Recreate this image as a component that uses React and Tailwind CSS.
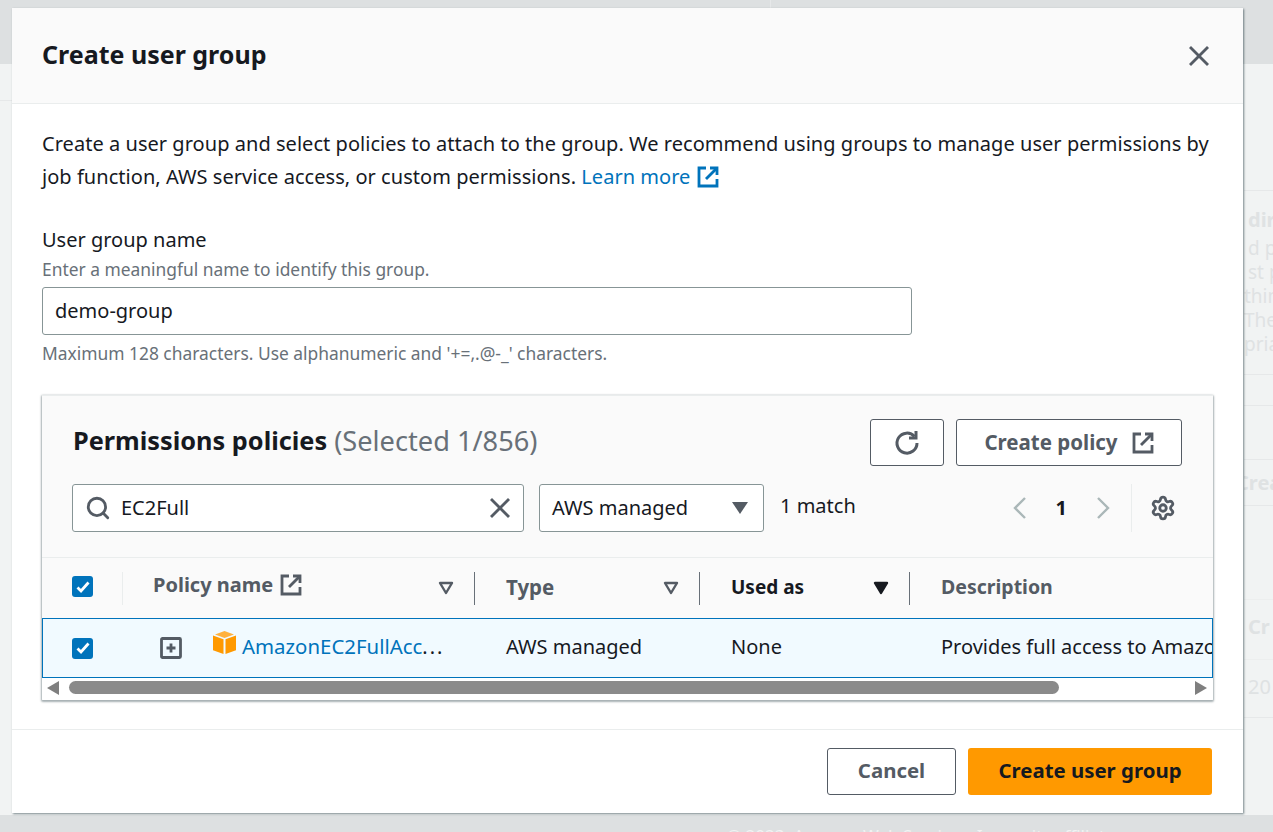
import React from 'react';
import { Search, Settings } from 'lucide-react';

const ExternalIcon = ({ className }) => (
  <svg viewBox="0 0 22 22" fill="none" stroke="currentColor" strokeWidth="2.8" className={className}>
    <path d="M9 2H2v18h18v-7" />
    <path d="M13 2h7v7" />
    <path d="M20 2L9 13" />
  </svg>
);

const CloseIcon = ({ className }) => (
  <svg viewBox="0 0 22 22" fill="none" stroke="currentColor" strokeWidth="2.8" className={className}>
    <path d="M2 2l18 18" />
    <path d="M20 2L2 20" />
  </svg>
);

const SortIcon = ({ filled }) => (
  <svg viewBox="0 0 16 14" className="w-4 h-3.5">
    <path
      d="M2 2h12L8 12z"
      fill={filled ? '#16191f' : 'none'}
      stroke={filled ? '#16191f' : '#545b64'}
      strokeWidth="2.4"
      strokeLinejoin="round"
    />
  </svg>
);

const Checkbox = () => (
  <div className="w-[21px] h-[21px] rounded-[3px] bg-[#0073bb] flex items-center justify-center">
    <svg viewBox="0 0 16 16" fill="none" stroke="white" strokeWidth="2.8" className="w-4 h-4">
      <path d="M2.5 8.5l3.5 3.5 7.5-8.5" />
    </svg>
  </div>
);

const Divider = ({ light }) => (
  <div className={`w-px h-[33px] ${light ? 'bg-[#eaeded]' : 'bg-[#687078]'}`} />
);

const HeadCell = ({ label, dark, filled, size }) => (
  <div className="flex items-center h-full pl-[31px]">
    <span className={`font-bold pb-[2px] ${size} ${dark ? 'text-[#16191f]' : 'text-[#545b64]'}`}>{label}</span>
    <div className="ml-auto flex items-center">
      <div className="mr-5"><SortIcon filled={filled} /></div>
      <Divider />
    </div>
  </div>
);

const PagerArrow = ({ d }) => (
  <svg viewBox="0 0 16 24" fill="none" stroke="#aab7b8" strokeWidth="2.4" className="w-4 h-6">
    <path d={d} />
  </svg>
);

export default function App() {
  return (
    <div className="relative h-[832px] w-[1273px] overflow-hidden bg-[#f1f3f3] text-[#16191f] font-['Noto_Sans',sans-serif]">
      {/* page behind the dialog */}
      <div className="h-16 bg-[#dde0e1]">
        <div className="ml-[770px] h-2 border-l border-[#e6e8e9]" />
      </div>
      <div className="flex">
        <div className="w-3 h-[37px] border-b border-[#e6e8e9]" />
        <div className="ml-auto w-[29px] flex flex-col text-[#dfe2e3] whitespace-nowrap overflow-hidden">
          <div className="h-[127px] border-b border-[#e6e8e9]" />
          <div className="h-[184px] border-b border-[#e6e8e9] pt-[16px]">
            <div className="pl-1 text-[20px] font-bold leading-[26px]">dir</div>
            <div className="text-[19px] leading-[24px] pt-[3px]">
              <div className="pl-1">d po</div>
              <div className="pl-1">st pr</div>
              <div>thing</div>
              <div>Ther</div>
              <div>pria</div>
            </div>
          </div>
          <div className="h-[31px] border-b border-[#e6e8e9]" />
          <div className="h-[54px] border-b border-[#e6e8e9]" />
          <div className="h-[46px] border-b border-[#e6e8e9] pt-[10px] font-bold text-[20px] leading-[26px] -ml-2">Crea</div>
          <div className="h-[94px] border-b border-[#eceeee]" />
          <div className="h-[60px] border-b border-[#eceeee] pt-[14px] pl-1 font-bold text-[20px] leading-[26px]">Cr</div>
          <div className="h-[58px] border-b border-[#e6e8e9] pt-[14px] pl-1 text-[20px] leading-[26px]">20</div>
        </div>
      </div>
      <div className="absolute left-0 right-0 bottom-0 h-[17px] bg-[#dde0e1] text-[#f1f3f3] text-[17px] leading-[17px] pl-[727px] pt-[12px] whitespace-nowrap overflow-hidden">
        © 2023, Amazon Web Services, Inc. or its affiliates.
      </div>

      {/* dialog */}
      <div className="absolute left-3 top-2 w-[1231px] h-[805px] bg-white flex flex-col shadow-[1px_1px_2px_rgba(0,28,36,0.5)]">
        <div className="h-[96px] shrink-0 bg-[#fafafa] border-b border-[#eaeded] flex items-center justify-between pl-[30px] pr-[33px]">
          <h1 className="text-[25px] font-bold leading-none pb-[2px]">Create user group</h1>
          <CloseIcon className="w-[22px] h-[22px] text-[#545b64]" />
        </div>

        <div className="flex-1 pl-[30px] pr-[30px] pt-[23px]">
          <p className="text-[20px] leading-[33px] tracking-[0.04px]">
            Create a user group and select policies to attach to the group. We recommend using groups to manage user permissions by job function, AWS service access, or custom permissions.{' '}
            <span className="text-[#0073bb] inline-flex items-center gap-[7px]">
              Learn more <ExternalIcon className="w-[22px] h-[22px]" />
            </span>
          </p>

          <div className="mt-[34px] text-[20px] leading-[26px]">User group name</div>
          <div className="text-[17.4px] leading-[22px] mt-[5px] text-[#687078]">Enter a meaningful name to identify this group.</div>
          <div className="mt-[7px] w-[870px] h-12 border border-[#879596] rounded-[3px] flex items-center px-3 text-[20px]">demo-group</div>
          <div className="text-[17.4px] leading-[22px] mt-[7px] text-[#687078]">Maximum 128 characters. Use alphanumeric and '+=,.@-_' characters.</div>

          {/* policies table */}
          <div className="mt-[31px] w-[1171px] h-[305px] rounded-[1px] border-t border-[#eaeded] shadow-[0_1px_2px_1px_rgba(0,28,36,0.35)] flex flex-col overflow-hidden">
            <div className="h-[162px] shrink-0 bg-[#fafafa] border-b border-[#eaeded] pl-[30px] pr-[31px]">
              <div className="flex items-start justify-between pt-[23px]">
                <div className="h-[47px] flex items-center pl-px pb-[3px] whitespace-nowrap">
                  <span className="font-bold text-[25.3px]">Permissions policies</span>
                  <span className="ml-[7px] text-[#687078] text-[27.2px]">(Selected 1/856)</span>
                </div>
                <div className="flex gap-3">
                  <div className="w-[74px] h-[47px] bg-white border border-[#545b64] rounded-[3px] flex items-center justify-center text-[#545b64]">
                    <svg viewBox="0 0 26 26" fill="none" stroke="currentColor" strokeWidth="3" className="w-[26px] h-[26px]">
                      <path d="M20.5 6.5A10 10 0 1 0 23 13" />
                      <path d="M22 1v7h-7" />
                    </svg>
                  </div>
                  <div className="w-[226px] h-[47px] bg-white border border-[#545b64] rounded-[3px] flex items-center justify-center gap-[14px] text-[#545b64] font-bold text-[20.5px]">
                    Create policy <ExternalIcon className="w-[22px] h-[22px]" />
                  </div>
                </div>
              </div>

              <div className="flex items-center mt-[18px]">
                <div className="w-[452px] h-12 bg-white border border-[#879596] rounded-[3px] flex items-center pl-3 pr-3 text-[20px]">
                  <Search className="w-[26px] h-[26px] text-[#545b64]" strokeWidth={2.6} />
                  <span className="ml-[10px]">EC2Full</span>
                  <CloseIcon className="w-[22px] h-[22px] ml-auto text-[#545b64]" />
                </div>
                <div className="ml-[15px] w-[225px] h-12 bg-white border border-[#879596] rounded-[3px] flex items-center justify-between pl-3 pr-[15px] text-[20px]">
                  AWS managed
                  <svg viewBox="0 0 16 12" className="w-4 h-3"><path d="M0 0h16L8 12z" fill="#545b64" /></svg>
                </div>
                <div className="ml-4 text-[20px] pb-[5px]">1 match</div>
                <div className="ml-auto flex items-center h-12">
                  <PagerArrow d="M13 2L3 12l10 10" />
                  <span className="mx-[28px] text-[20px] font-bold">1</span>
                  <PagerArrow d="M3 2l10 10L3 22" />
                  <div className="w-px h-12 bg-[#eaeded] ml-5 mr-[18px]" />
                  <Settings className="w-[26px] h-[26px] text-[#545b64] mr-[6px]" strokeWidth={2.6} />
                </div>
              </div>
            </div>

            <div className="h-[60px] shrink-0 bg-[#fafafa] grid grid-cols-[81px_352px_225px_210px_1fr] items-center">
              <div className="h-full flex items-center pl-[30px]">
                <div className="pb-[3px]"><Checkbox /></div>
                <div className="ml-auto"><Divider light /></div>
              </div>
              <div className="flex items-center h-full pl-[30px] pb-[7px]">
                <span className="font-bold text-[20px] text-[#545b64]">Policy name</span>
                <ExternalIcon className="w-[22px] h-[22px] ml-[7px] text-[#545b64]" />
                <div className="ml-auto flex items-center pt-[7px]">
                  <div className="mr-5"><SortIcon /></div>
                  <Divider />
                </div>
              </div>
              <HeadCell label="Type" size="text-[20.5px]" />
              <HeadCell label="Used as" dark filled size="text-[19px]" />
              <div className="pl-[31px] pb-[2px] font-bold text-[19.5px] text-[#545b64] whitespace-nowrap">Description</div>
            </div>

            <div className="h-[60px] shrink-0 bg-[#f1faff] border-y border-x border-[#0073bb] grid grid-cols-[79px_352px_225px_210px_1fr] items-center text-[20px] whitespace-nowrap overflow-hidden">
              <div className="pl-[29px]"><Checkbox /></div>
              <div className="flex items-center">
                <svg viewBox="0 0 22 22" fill="none" stroke="#545b64" strokeWidth="2.8" className="w-[22px] h-[22px] ml-[38px] shrink-0">
                  <rect x="1.5" y="1.5" width="19" height="19" rx="1" />
                  <path d="M11 6.5v9M6.5 11h9" />
                </svg>
                <svg viewBox="0 0 23 23" className="w-[23px] h-[23px] ml-[31px] mb-[11px] shrink-0">
                  <path d="M11.5 0L21 3.5l-9.5 3.5L2 3.5z" fill="#ffb13d" />
                  <path d="M0 4.5l10.5 3.7V23L0 19.3z" fill="#ff9900" />
                  <path d="M23 4.5l-10.5 3.7V23L23 19.3z" fill="#ff9900" />
                </svg>
                <span className="ml-[6px] text-[#0073bb] text-[20.4px] pb-[3px]">AmazonEC2FullAcc</span>
                <span className="text-[#16191f] pb-[3px] tracking-[2px]">...</span>
              </div>
              <div className="pl-8 pb-[2px]">AWS managed</div>
              <div className="pl-8 pb-[2px]">None</div>
              <div className="pl-8 pb-[2px]">Provides full access to Amazon EC2 via the AWS Management Console.</div>
            </div>

            <div className="flex-1 bg-white flex items-center pl-[5px] pr-[6px] pb-[3px]">
              <svg viewBox="0 0 12 14" className="w-3 h-3.5"><path d="M12 0v14L0 7z" fill="#7f7f7f" /></svg>
              <div className="ml-[10px] w-[990px] h-[13px] rounded-full bg-[#8a8a8a]" />
              <svg viewBox="0 0 12 14" className="w-3 h-3.5 ml-auto"><path d="M0 0v14l12-7z" fill="#7f7f7f" /></svg>
            </div>
          </div>
        </div>

        <div className="h-[84px] shrink-0 border-t border-[#eaeded] flex justify-end items-start pt-[18px] pr-[31px] gap-3 font-bold text-[20.4px]">
          <div className="w-[129px] h-[47px] pb-[2px] bg-white border border-[#545b64] rounded-[3px] flex items-center justify-center text-[#545b64]">Cancel</div>
          <div className="w-[244px] h-[47px] pb-[2px] bg-[#ff9900] rounded-[3px] flex items-center justify-center">Create user group</div>
        </div>
      </div>
    </div>
  );
}
